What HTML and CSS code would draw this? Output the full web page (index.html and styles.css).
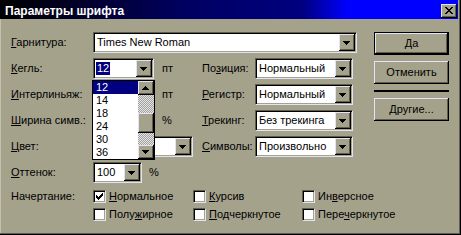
FILE: index.html
```html
<!DOCTYPE html>
<html lang="ru">
<head>
<meta charset="utf-8">
<title>Параметры шрифта</title>
<link rel="stylesheet" href="styles.css">
</head>
<body>
<div class="window">
  <div class="titlebar">
    <span class="title">Параметры шрифта</span>
    <span class="close">
      <svg width="8" height="7" viewBox="0 0 8 7" shape-rendering="crispEdges">
        <rect x="0" y="0" width="2" height="1"/><rect x="6" y="0" width="2" height="1"/>
        <rect x="1" y="1" width="2" height="1"/><rect x="5" y="1" width="2" height="1"/>
        <rect x="2" y="2" width="4" height="1"/>
        <rect x="3" y="3" width="2" height="1"/>
        <rect x="2" y="4" width="4" height="1"/>
        <rect x="1" y="5" width="2" height="1"/><rect x="5" y="5" width="2" height="1"/>
        <rect x="0" y="6" width="2" height="1"/><rect x="6" y="6" width="2" height="1"/>
      </svg>
    </span>
  </div>

  <div class="content">
    <div class="main">
      <div class="form">
        <span class="lbl"><u>Г</u>арнитура:</span>
        <div class="combo w-font"><span class="val">Times New Roman</span><span class="dd"><svg class="arrow" width="7" height="4" viewBox="0 0 7 4" shape-rendering="crispEdges"><rect x="0" y="0" width="7" height="1"/><rect x="1" y="1" width="5" height="1"/><rect x="2" y="2" width="3" height="1"/><rect x="3" y="3" width="1" height="1"/></svg></span></div>

        <span class="lbl"><u>К</u>егль:</span>
        <div class="field"><div class="combo w-num"><span class="val"><span class="sel">12</span></span><span class="dd"><svg class="arrow" width="7" height="4" viewBox="0 0 7 4" shape-rendering="crispEdges"><rect x="0" y="0" width="7" height="1"/><rect x="1" y="1" width="5" height="1"/><rect x="2" y="2" width="3" height="1"/><rect x="3" y="3" width="1" height="1"/></svg></span></div><span class="unit">пт</span></div>
        <span class="lbl">По<u>з</u>иция:</span>
        <div class="combo w-right"><span class="val">Нормальный</span><span class="dd"><svg class="arrow" width="7" height="4" viewBox="0 0 7 4" shape-rendering="crispEdges"><rect x="0" y="0" width="7" height="1"/><rect x="1" y="1" width="5" height="1"/><rect x="2" y="2" width="3" height="1"/><rect x="3" y="3" width="1" height="1"/></svg></span></div>

        <span class="lbl"><u>И</u>нтерлиньяж:</span>
        <div class="field"><div class="combo w-num"><span class="val"></span><span class="dd"><svg class="arrow" width="7" height="4" viewBox="0 0 7 4" shape-rendering="crispEdges"><rect x="0" y="0" width="7" height="1"/><rect x="1" y="1" width="5" height="1"/><rect x="2" y="2" width="3" height="1"/><rect x="3" y="3" width="1" height="1"/></svg></span></div><span class="unit">пт</span></div>
        <span class="lbl"><u>Р</u>егистр:</span>
        <div class="combo w-right"><span class="val">Нормальный</span><span class="dd"><svg class="arrow" width="7" height="4" viewBox="0 0 7 4" shape-rendering="crispEdges"><rect x="0" y="0" width="7" height="1"/><rect x="1" y="1" width="5" height="1"/><rect x="2" y="2" width="3" height="1"/><rect x="3" y="3" width="1" height="1"/></svg></span></div>

        <span class="lbl"><u>Ш</u>ирина симв.:</span>
        <div class="field"><div class="combo w-num"><span class="val"></span><span class="dd"><svg class="arrow" width="7" height="4" viewBox="0 0 7 4" shape-rendering="crispEdges"><rect x="0" y="0" width="7" height="1"/><rect x="1" y="1" width="5" height="1"/><rect x="2" y="2" width="3" height="1"/><rect x="3" y="3" width="1" height="1"/></svg></span></div><span class="unit">%</span></div>
        <span class="lbl"><u>Т</u>рекинг:</span>
        <div class="combo w-right"><span class="val">Без трекинга</span><span class="dd"><svg class="arrow" width="7" height="4" viewBox="0 0 7 4" shape-rendering="crispEdges"><rect x="0" y="0" width="7" height="1"/><rect x="1" y="1" width="5" height="1"/><rect x="2" y="2" width="3" height="1"/><rect x="3" y="3" width="1" height="1"/></svg></span></div>

        <span class="lbl"><u>Ц</u>вет:</span>
        <div class="field"><div class="combo w-color"><span class="val"></span><span class="dd"><svg class="arrow" width="7" height="4" viewBox="0 0 7 4" shape-rendering="crispEdges"><rect x="0" y="0" width="7" height="1"/><rect x="1" y="1" width="5" height="1"/><rect x="2" y="2" width="3" height="1"/><rect x="3" y="3" width="1" height="1"/></svg></span></div></div>
        <span class="lbl"><u>С</u>имволы:</span>
        <div class="combo w-right"><span class="val">Произвольно</span><span class="dd"><svg class="arrow" width="7" height="4" viewBox="0 0 7 4" shape-rendering="crispEdges"><rect x="0" y="0" width="7" height="1"/><rect x="1" y="1" width="5" height="1"/><rect x="2" y="2" width="3" height="1"/><rect x="3" y="3" width="1" height="1"/></svg></span></div>

        <span class="lbl"><u>О</u>ттенок:</span>
        <div class="field"><div class="combo w-shade"><span class="val">100</span><span class="dd"><svg class="arrow" width="7" height="4" viewBox="0 0 7 4" shape-rendering="crispEdges"><rect x="0" y="0" width="7" height="1"/><rect x="1" y="1" width="5" height="1"/><rect x="2" y="2" width="3" height="1"/><rect x="3" y="3" width="1" height="1"/></svg></span></div><span class="unit unit-tight">%</span></div>
      </div>

      <div class="styles">
        <span class="lbl">Начертание:</span>
        <span class="check"><span class="box"><svg width="7" height="7" viewBox="0 0 7 7" shape-rendering="crispEdges"><rect x="6" y="0" width="1" height="1"/><rect x="5" y="1" width="2" height="1"/><rect x="0" y="2" width="1" height="1"/><rect x="4" y="2" width="3" height="1"/><rect x="0" y="3" width="2" height="1"/><rect x="3" y="3" width="3" height="1"/><rect x="0" y="4" width="5" height="1"/><rect x="1" y="5" width="3" height="1"/><rect x="2" y="6" width="1" height="1"/></svg></span><span><u>Н</u>ормальное</span></span>
        <span class="check"><span class="box"></span><span><u>К</u>урсив</span></span>
        <span class="check"><span class="box"></span><span>Ин<u>в</u>ерсное</span></span>
        <span class="check c2"><span class="box"></span><span>Полу<u>ж</u>ирное</span></span>
        <span class="check"><span class="box"></span><span><u>П</u>одчеркнутое</span></span>
        <span class="check"><span class="box"></span><span>Пере<u>ч</u>еркнутое</span></span>
      </div>
    </div>

    <div class="side">
      <span class="btn default">Да</span>
      <span class="btn">Отменить</span>
      <span class="sep"></span>
      <span class="btn"><u>Д</u>ругие...</span>
    </div>
  </div>

  <div class="droplist">
    <div class="items">
      <span class="item on">12</span>
      <span class="item">14</span>
      <span class="item">18</span>
      <span class="item">24</span>
      <span class="item">30</span>
      <span class="item">36</span>
    </div>
    <div class="vscroll">
      <span class="sbtn"><svg width="7" height="4" viewBox="0 0 7 4" shape-rendering="crispEdges"><rect x="3" y="0" width="1" height="1"/><rect x="2" y="1" width="3" height="1"/><rect x="1" y="2" width="5" height="1"/><rect x="0" y="3" width="7" height="1"/></svg></span>
      <span class="track t1"></span>
      <span class="thumb"></span>
      <span class="track t2"></span>
      <span class="sbtn"><svg width="7" height="4" viewBox="0 0 7 4" shape-rendering="crispEdges"><rect x="0" y="0" width="7" height="1"/><rect x="1" y="1" width="5" height="1"/><rect x="2" y="2" width="3" height="1"/><rect x="3" y="3" width="1" height="1"/></svg></span>
    </div>
  </div>
</div>
</body>
</html>
```
FILE: styles.css
```css
:root {
  --face: #a5a28c;
  --hl: #e2e2f8;
  --sh: #5f5d4d;
  --lt: #c4c1ab;
  --navy: #000080;
}

* { box-sizing: border-box; }

html, body {
  margin: 0;
  padding: 0;
  background: var(--face);
}

body {
  font-family: "Liberation Sans", Arial, sans-serif;
  font-size: 11px;
  color: #000;
}

u { text-decoration: underline; text-underline-offset: 1px; }

.window {
  position: relative;
  width: 461px;
  height: 235px;
  background: var(--face);
  border-right: 1px solid #000;
  border-bottom: 1px solid #000;
  padding: 0 2px 2px 0;
  box-shadow: inset -1px -1px 0 var(--sh), inset 1px 0 0 var(--lt);
  overflow: hidden;
}

.titlebar {
  height: 19px;
  display: flex;
  align-items: center;
  justify-content: space-between;
  padding: 0 1px 1px 5px;
  background: linear-gradient(90deg, #000 0%, #000060 40%, #000080 66%, #0000ff 76%, #0000ff 100%);
}

.title {
  color: #fff;
  font-weight: bold;
  font-size: 12px;
  line-height: 14px;
  padding-top: 3px;
}

.close {
  width: 16px;
  height: 14px;
  margin-top: 3px;
  background: var(--face);
  box-shadow: inset -1px -1px 0 #000, inset 1px 1px 0 var(--hl), inset -2px -2px 0 var(--sh);
  display: flex;
  align-items: flex-start;
  justify-content: flex-start;
  padding: 3px 0 0 4px;
}

.close svg { display: block; fill: #000; }

.content {
  display: flex;
  align-items: flex-start;
  padding: 13px 0 0 11px;
}

.main {
  width: 346px;
  flex: none;
}

.form {
  display: grid;
  grid-template-columns: 82px 109px 53px 102px;
  grid-template-rows: repeat(6, 21px);
  row-gap: 5px;
  align-items: center;
}

.lbl {
  white-space: nowrap;
  line-height: 13px;
}

.form > .w-font { grid-column: 2 / 5; }

.field {
  display: flex;
  align-items: center;
  gap: 8px;
}

.unit { line-height: 13px; }
.unit-tight { margin-left: -1px; }

.combo {
  height: 21px;
  display: flex;
  align-items: stretch;
  background: #fff;
  border: 1px solid;
  border-color: var(--sh) var(--hl) var(--hl) var(--sh);
  box-shadow: inset 1px 1px 0 #000, inset -1px -1px 0 var(--face);
  padding: 1px;
}

.w-font { width: 264px; }
.w-num { width: 61px; }
.w-color { width: 100px; }
.w-shade { width: 49px; }
.w-right { width: 98px; }

.val {
  flex: 1;
  display: flex;
  align-items: center;
  padding-left: 2px;
  white-space: nowrap;
  overflow: hidden;
  line-height: 13px;
}

.sel {
  background: var(--navy);
  color: #fff;
  padding: 0 1px;
  margin-left: -1px;
}

.dd {
  width: 16px;
  height: 17px;
  flex: none;
  background: var(--face);
  box-shadow: inset -1px -1px 0 #000, inset 1px 1px 0 var(--hl), inset -2px -2px 0 var(--sh);
  display: flex;
  align-items: center;
  justify-content: center;
  padding-right: 1px;
}

.arrow, .sbtn svg { display: block; fill: #000; }

.styles {
  display: grid;
  grid-template-columns: 82px 100px 109px 55px;
  grid-template-rows: 13px 13px;
  row-gap: 5px;
  margin-top: 7px;
  align-items: center;
}

.styles .c2 { grid-column: 2; }

.check {
  display: flex;
  align-items: center;
  gap: 3px;
  white-space: nowrap;
  line-height: 13px;
}

.box {
  width: 13px;
  height: 13px;
  flex: none;
  background: #fff;
  border: 1px solid;
  border-color: var(--sh) var(--hl) var(--hl) var(--sh);
  box-shadow: inset 1px 1px 0 #000, inset -1px -1px 0 var(--face);
  padding: 2px;
}

.box svg { display: block; fill: #000; }

.side {
  display: flex;
  flex-direction: column;
  width: 75px;
  flex: none;
  margin-left: 17px;
}

.btn {
  height: 23px;
  display: flex;
  align-items: center;
  justify-content: center;
  background: var(--face);
  box-shadow: inset -1px -1px 0 #000, inset 1px 1px 0 var(--hl), inset -2px -2px 0 var(--sh);
  white-space: nowrap;
  padding-bottom: 1px;
}

.btn.default {
  border: 1px solid #000;
}

.btn + .btn { margin-top: 6px; }

.sep {
  height: 2px;
  background: #000;
  margin: 6px 0;
}

.droplist {
  position: absolute;
  left: 92px;
  top: 80px;
  width: 63px;
  height: 80px;
  border: 1px solid #000;
  background: #fff;
  display: flex;
  z-index: 2;
}

.items {
  width: 45px;
  display: flex;
  flex-direction: column;
}

.item {
  height: 13px;
  line-height: 13px;
  padding-left: 3px;
}

.item.on {
  background: var(--navy);
  color: #fff;
}

.vscroll {
  width: 16px;
  display: flex;
  flex-direction: column;
}

.sbtn, .thumb {
  background: var(--face);
  box-shadow: inset -1px -1px 0 #000, inset 1px 1px 0 var(--hl), inset -2px -2px 0 var(--sh);
}

.sbtn {
  height: 14px;
  display: flex;
  align-items: center;
  justify-content: center;
  padding-right: 1px;
}

.thumb { height: 20px; }

.track {
  background: repeating-conic-gradient(var(--hl) 0 25%, var(--face) 0 50%) 0 0 / 2px 2px;
}

.t1 { height: 18px; }
.t2 { flex: 1; }
```
